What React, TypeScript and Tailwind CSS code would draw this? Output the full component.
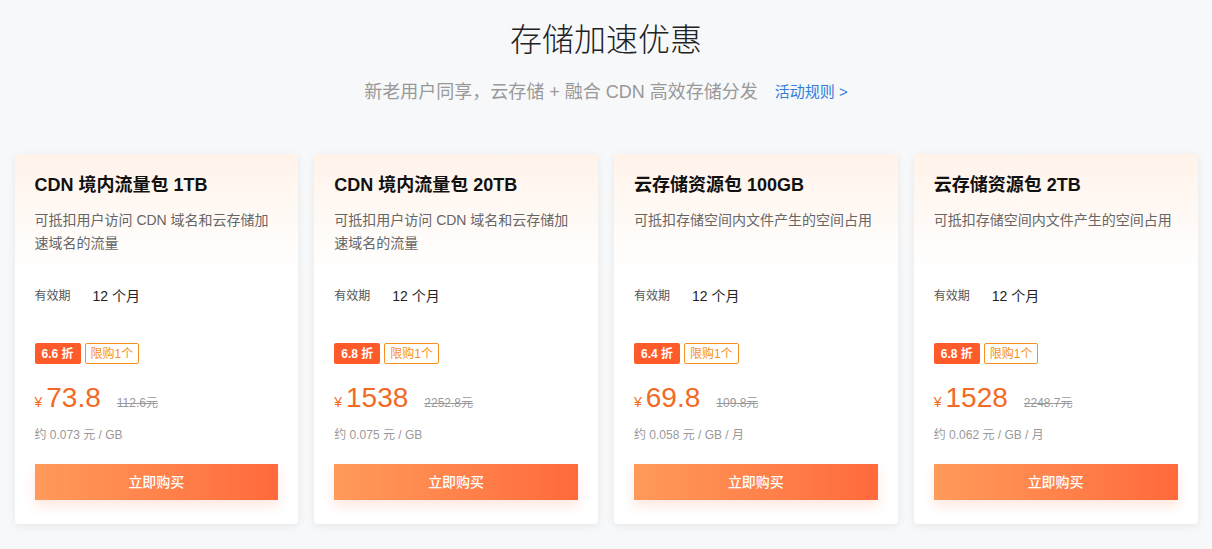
import React from 'react';

interface Plan {
  id: string;
  title: string;
  desc: string;
  discount: string;
  price: string;
  original: string;
  unit: string;
}

const plans: Plan[] = [
  {
    id: 'cdn-1tb',
    title: 'CDN 境内流量包 1TB',
    desc: '可抵扣用户访问 CDN 域名和云存储加速域名的流量',
    discount: '6.6 折',
    price: '73.8',
    original: '112.6元',
    unit: '约 0.073 元 / GB',
  },
  {
    id: 'cdn-20tb',
    title: 'CDN 境内流量包 20TB',
    desc: '可抵扣用户访问 CDN 域名和云存储加速域名的流量',
    discount: '6.8 折',
    price: '1538',
    original: '2252.8元',
    unit: '约 0.075 元 / GB',
  },
  {
    id: 'oss-100gb',
    title: '云存储资源包 100GB',
    desc: '可抵扣存储空间内文件产生的空间占用',
    discount: '6.4 折',
    price: '69.8',
    original: '109.8元',
    unit: '约 0.058 元 / GB / 月',
  },
  {
    id: 'oss-2tb',
    title: '云存储资源包 2TB',
    desc: '可抵扣存储空间内文件产生的空间占用',
    discount: '6.8 折',
    price: '1528',
    original: '2248.7元',
    unit: '约 0.062 元 / GB / 月',
  },
];

const PlanCard: React.FC<{ plan: Plan }> = ({ plan }) => {
  return (
    <div className="flex flex-col bg-white rounded-[3px] shadow-[0_2px_8px_rgba(0,0,0,0.07)] overflow-hidden">
      <div className="h-[118px] px-5 pt-[18px] bg-gradient-to-b from-[#fff3ea] to-white">
        <h3 className="text-[18px] leading-[26px] font-bold text-[#111]">{plan.title}</h3>
        <p className="mt-[11px] text-[14px] leading-[23px] text-[#666]">{plan.desc}</p>
      </div>

      <div className="flex flex-col px-5 pb-6">
        <div className="mt-[14px] flex items-center h-5">
          <span className="w-[58px] text-[12px] text-[#555]">有效期</span>
          <span className="text-[14px] text-[#222]">12 个月</span>
        </div>

        <div className="mt-[37px] flex items-center gap-1">
          <span className="h-[21px] px-[7px] flex items-center rounded-[2px] bg-[#ff5a2a] text-white text-[12px] font-bold">
            {plan.discount}
          </span>
          <span className="h-[21px] px-[5px] flex items-center rounded-[2px] border border-[#f7901e] text-[#f7901e] text-[12px]">
            限购1个
          </span>
        </div>

        <div className="mt-[16px] flex items-baseline h-9 leading-9 text-[#f26a24]">
          <span className="text-[14px] mr-1">¥</span>
          <span className="text-[28px]">{plan.price}</span>
          <span className="ml-4 text-[12px] text-[#999] line-through">{plan.original}</span>
        </div>

        <div className="mt-[9px] text-[12px] leading-5 text-[#999]">{plan.unit}</div>

        <button className="mt-[19px] h-9 w-full bg-gradient-to-r from-[#ff9a5a] to-[#ff693c] text-white text-[14px] font-medium shadow-[0_6px_12px_rgba(255,120,70,0.18)]">
          立即购买
        </button>
      </div>
    </div>
  );
};

export default function App() {
  return (
    <div
      className="min-h-[549px] bg-[#f7f8fa] pt-[18px]"
      style={{ fontFamily: '"Liberation Sans", Arial, "Noto Sans CJK SC", sans-serif' }}
    >
      <h1 className="text-center text-[32px] leading-[44px] font-light text-[#222]">存储加速优惠</h1>
      <div className="mt-[17px] flex items-center justify-center gap-[17px] leading-[26px]">
        <span className="text-[18px] text-[#999]">新老用户同享，云存储 + 融合 CDN 高效存储分发</span>
        <a className="text-[15px] text-[#2f7ddf] cursor-pointer">活动规则 &gt;</a>
      </div>

      <div className="mx-auto mt-[49px] w-[1183px] grid grid-cols-4 gap-4">
        {plans.map((plan) => (
          <PlanCard key={plan.id} plan={plan} />
        ))}
      </div>
    </div>
  );
}
